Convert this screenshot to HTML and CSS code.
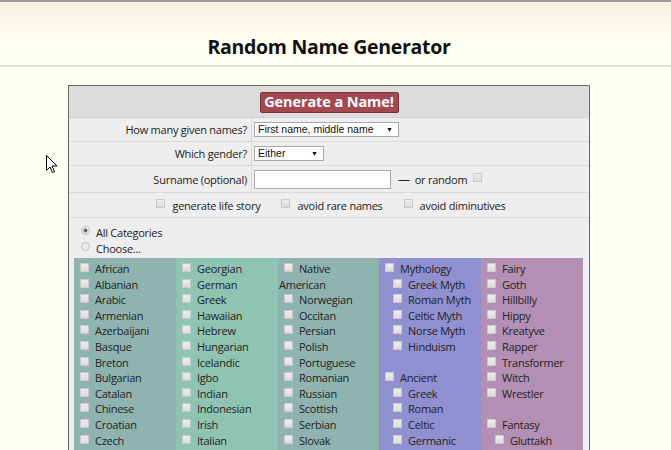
FILE: index.html
```html
<!DOCTYPE html>
<html>
<head>
<meta charset="utf-8">
<title>Random Name Generator</title>
<link rel="stylesheet" href="styles.css">
</head>
<body class="page">
<header class="masthead">
  <div class="wrap">
    <h1 class="title">Random Name Generator</h1>
  </div>
</header>
<main class="wrap">
  <form class="panel">
    <div class="panel-head">
      <button type="button" class="gen-btn">Generate a Name!</button>
    </div>
    <div class="frow r1">
      <label class="flabel">How many given names?</label>
      <div class="ffield">
        <span class="sel sel-wide">First name, middle name</span>
      </div>
    </div>
    <div class="frow r2">
      <label class="flabel">Which gender?</label>
      <div class="ffield">
        <span class="sel sel-narrow">Either</span>
      </div>
    </div>
    <div class="frow r3">
      <label class="flabel">Surname (optional)</label>
      <div class="ffield">
        <input class="txt" type="text">
        <span class="dash">—</span>
        <span class="orr">or random</span>
        <input type="checkbox" class="cb">
      </div>
    </div>
    <div class="opts">
      <label class="opt"><input type="checkbox" class="cb"> generate life story</label>
      <label class="opt"><input type="checkbox" class="cb"> avoid rare names</label>
      <label class="opt"><input type="checkbox" class="cb"> avoid diminutives</label>
    </div>
    <div class="cats">
      <div class="radios">
        <label class="rad"><input type="radio" name="c" class="rb" checked> All Categories</label>
        <label class="rad"><input type="radio" name="c" class="rb"> Choose...</label>
      </div>
      <div class="cols">
        <div class="col c1">
          <label class="it"><input type="checkbox" class="cb">African</label>
          <label class="it"><input type="checkbox" class="cb">Albanian</label>
          <label class="it"><input type="checkbox" class="cb">Arabic</label>
          <label class="it"><input type="checkbox" class="cb">Armenian</label>
          <label class="it"><input type="checkbox" class="cb">Azerbaijani</label>
          <label class="it"><input type="checkbox" class="cb">Basque</label>
          <label class="it"><input type="checkbox" class="cb">Breton</label>
          <label class="it"><input type="checkbox" class="cb">Bulgarian</label>
          <label class="it"><input type="checkbox" class="cb">Catalan</label>
          <label class="it"><input type="checkbox" class="cb">Chinese</label>
          <label class="it"><input type="checkbox" class="cb">Croatian</label>
          <label class="it"><input type="checkbox" class="cb">Czech</label>
        </div>
        <div class="col c2">
          <label class="it"><input type="checkbox" class="cb">Georgian</label>
          <label class="it"><input type="checkbox" class="cb">German</label>
          <label class="it"><input type="checkbox" class="cb">Greek</label>
          <label class="it"><input type="checkbox" class="cb">Hawaiian</label>
          <label class="it"><input type="checkbox" class="cb">Hebrew</label>
          <label class="it"><input type="checkbox" class="cb">Hungarian</label>
          <label class="it"><input type="checkbox" class="cb">Icelandic</label>
          <label class="it"><input type="checkbox" class="cb">Igbo</label>
          <label class="it"><input type="checkbox" class="cb">Indian</label>
          <label class="it"><input type="checkbox" class="cb">Indonesian</label>
          <label class="it"><input type="checkbox" class="cb">Irish</label>
          <label class="it"><input type="checkbox" class="cb">Italian</label>
        </div>
        <div class="col c3">
          <label class="it"><input type="checkbox" class="cb">Native American</label>
          <label class="it"><input type="checkbox" class="cb">Norwegian</label>
          <label class="it"><input type="checkbox" class="cb">Occitan</label>
          <label class="it"><input type="checkbox" class="cb">Persian</label>
          <label class="it"><input type="checkbox" class="cb">Polish</label>
          <label class="it"><input type="checkbox" class="cb">Portuguese</label>
          <label class="it"><input type="checkbox" class="cb">Romanian</label>
          <label class="it"><input type="checkbox" class="cb">Russian</label>
          <label class="it"><input type="checkbox" class="cb">Scottish</label>
          <label class="it"><input type="checkbox" class="cb">Serbian</label>
          <label class="it"><input type="checkbox" class="cb">Slovak</label>
        </div>
        <div class="col c4">
          <label class="it"><input type="checkbox" class="cb">Mythology</label>
          <label class="it sub"><input type="checkbox" class="cb">Greek Myth</label>
          <label class="it sub"><input type="checkbox" class="cb">Roman Myth</label>
          <label class="it sub"><input type="checkbox" class="cb">Celtic Myth</label>
          <label class="it sub"><input type="checkbox" class="cb">Norse Myth</label>
          <label class="it sub"><input type="checkbox" class="cb">Hinduism</label>
          <div class="gap"></div>
          <label class="it"><input type="checkbox" class="cb">Ancient</label>
          <label class="it sub"><input type="checkbox" class="cb">Greek</label>
          <label class="it sub"><input type="checkbox" class="cb">Roman</label>
          <label class="it sub"><input type="checkbox" class="cb">Celtic</label>
          <label class="it sub"><input type="checkbox" class="cb">Germanic</label>
        </div>
        <div class="col c5">
          <label class="it"><input type="checkbox" class="cb">Fairy</label>
          <label class="it"><input type="checkbox" class="cb">Goth</label>
          <label class="it"><input type="checkbox" class="cb">Hillbilly</label>
          <label class="it"><input type="checkbox" class="cb">Hippy</label>
          <label class="it"><input type="checkbox" class="cb">Kreatyve</label>
          <label class="it"><input type="checkbox" class="cb">Rapper</label>
          <label class="it"><input type="checkbox" class="cb">Transformer</label>
          <label class="it"><input type="checkbox" class="cb">Witch</label>
          <label class="it"><input type="checkbox" class="cb">Wrestler</label>
          <div class="gap"></div>
          <label class="it"><input type="checkbox" class="cb">Fantasy</label>
          <label class="it sub"><input type="checkbox" class="cb">Gluttakh</label>
        </div>
      </div>
    </div>
  </form>
</main>
<svg class="cursor" width="12" height="19" viewBox="0 0 12 19">
  <path d="M0.5 0.5 L0.5 15.5 L4 12 L6.5 17.5 L8.5 16.5 L6 11 L11 11 Z" fill="#fff" stroke="#000" stroke-width="1"/>
</svg>
</body>
</html>
```

FILE: styles.css
```css
html, body {
  margin: 0;
  padding: 0;
  height: 450px;
  overflow: hidden;
}
.page {
  background: #fffef2;
  font-family: "Open Sans", "Noto Sans", sans-serif;
  font-size: 11px;
  letter-spacing: -0.25px;
  color: #222;
  position: relative;
}
.wrap {
  width: 658px;
}
.masthead {
  border-top: 2px solid #9a9a96;
  border-bottom: 2px solid #e2e1d8;
  background: linear-gradient(#f6f2e2, #fffef2 60%);
  height: 63px;
}
.title {
  margin: 0;
  padding-top: 33px;
  text-align: center;
  font-family: "Open Sans", sans-serif;
  font-size: 19.5px;
  font-weight: 700;
  line-height: 24px;
  color: #111;
  letter-spacing: -0.3px;
}
.panel {
  margin: 18px 0 0 68px;
  width: 520px;
  border: 1px solid #666;
  background: #eeeeee;
}
.panel-head {
  background: #dddddd;
  height: 31px;
  display: flex;
  justify-content: center;
  align-items: center;
  border-bottom: 1px solid #d2d2d2;
}
.gen-btn {
  font-family: "Open Sans", sans-serif;
  font-weight: 700;
  font-size: 14.5px;
  letter-spacing: -0.1px;
  color: #fff;
  background: #a4484f;
  border: 1px solid #7a3038;
  border-radius: 2px;
  width: 139px;
  height: 21px;
  padding: 0;
  line-height: 18px;
  margin-top: 1px;
}
.frow {
  display: grid;
  grid-template-columns: 183px 1fr;
  border-bottom: 1px solid #dadada;
}
.r1 { height: 23px; }
.r2 { height: 23px; }
.r3 { height: 26px; }
.flabel {
  display: flex;
  align-items: center;
  justify-content: flex-end;
  padding-right: 4px;
  border-right: 1px solid #d8d8d8;
}
.ffield {
  display: flex;
  align-items: center;
  padding-left: 2px;
}
.sel {
  position: relative;
  display: block;
  box-sizing: border-box;
  height: 15px;
  background: #fff;
  border: 1px solid #a9a9a9;
  font-family: "Liberation Sans", Arial, sans-serif;
  font-size: 10.5px;
  letter-spacing: 0;
  line-height: 13px;
  padding-left: 3px;
  color: #111;
}
.sel::after {
  content: "▼";
  position: absolute;
  right: 5px;
  top: 0;
  font-size: 7px;
  line-height: 13px;
}
.sel-wide { width: 145px; }
.sel-narrow { width: 70px; }
.txt {
  box-sizing: border-box;
  width: 137px;
  height: 19px;
  border: 1px solid #a9a9a9;
  background: #fff;
  margin: 0;
}
.dash {
  margin-left: 7px;
  font-size: 12px;
}
.orr {
  margin-left: 5px;
}
.cb {
  appearance: none;
  -webkit-appearance: none;
  box-sizing: border-box;
  width: 9px;
  height: 9px;
  margin: 0;
  border: 1px solid #c9c9c9;
  background: linear-gradient(#ededed, #dddddd);
  flex: none;
}
.orr + .cb { margin-left: 6px; margin-top: -4px; }
.opts {
  height: 24px;
  display: flex;
  justify-content: center;
  align-items: center;
  gap: 21px;
  border-bottom: 1px solid #dadada;
  padding-left: 4px;
}
.opt {
  display: flex;
  align-items: center;
  gap: 6px;
}
.opt .cb { margin-top: -4px; margin-right: 1px; }
.cats {
  padding: 7px 5px 0 5px;
}
.radios {
  display: flex;
  flex-direction: column;
  padding-left: 7px;
  line-height: 15.5px;
  margin-bottom: 2px;
}
.rad {
  display: flex;
  align-items: center;
  gap: 6px;
}
.rb {
  appearance: none;
  -webkit-appearance: none;
  box-sizing: border-box;
  width: 9px;
  height: 9px;
  border-radius: 50%;
  margin: 0;
  border: 1px solid #bdbdbd;
  background: #ececec;
  position: relative;
  top: -2px;
}
.rb:checked {
  background: radial-gradient(circle, #666 0 1.8px, #ececec 2.3px);
}
.cols {
  display: grid;
  grid-template-columns: 102px 102px 101px 102px 102px;
  line-height: 15.6px;
  height: 200px;
}
.col {
  padding: 3px 0 0 1px;
}
.c1 { background: #8fb4b0; }
.c2 { background: #8fc4b2; }
.c3 { background: #8fb4b0; }
.c4 { background: #9090d0; }
.c5 { background: #b48fb4; }
.it {
  display: block;
}
.it .cb {
  display: inline-block;
  margin: 0 6px 0 5px;
  vertical-align: 1px;
}
.sub { padding-left: 8px; }
.gap { height: 15.6px; }
.cursor {
  position: absolute;
  left: 46px;
  top: 155px;
}
```
